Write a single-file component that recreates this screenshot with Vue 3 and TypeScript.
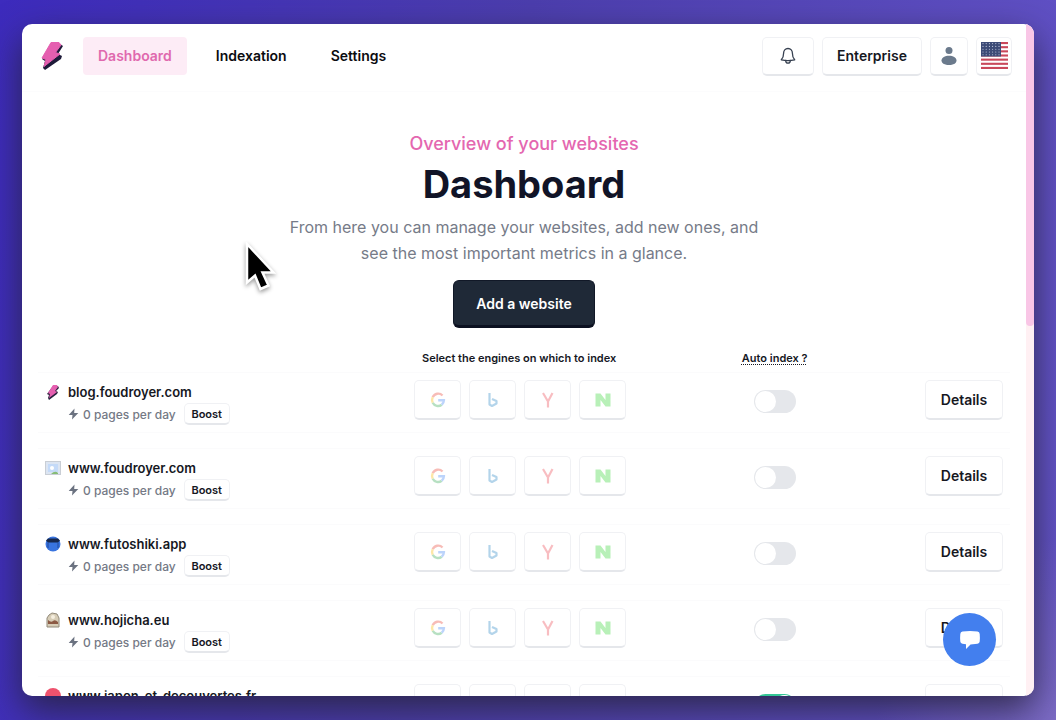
<script setup lang="ts">
import { ref } from 'vue'

interface Site {
  domain: string
  icon: 'bolt' | 'image' | 'ninja' | 'jar' | 'dot'
  auto: boolean
}

const navItems = ['Dashboard', 'Indexation', 'Settings']
const active = ref('Dashboard')
const engines = ['Google', 'Bing', 'Yandex', 'Naver']

const sites = ref<Site[]>([
  { domain: 'blog.foudroyer.com', icon: 'bolt', auto: false },
  { domain: 'www.foudroyer.com', icon: 'image', auto: false },
  { domain: 'www.futoshiki.app', icon: 'ninja', auto: false },
  { domain: 'www.hojicha.eu', icon: 'jar', auto: false },
  { domain: 'www.japon-et-decouvertes.fr', icon: 'dot', auto: true },
])
</script>

<template>
  <div class="backdrop">
    <div class="window">
      <div class="content">
        <header class="topbar">
          <a href="#" class="logo" aria-label="Foudroyer">
            <svg width="24" height="30" viewBox="0 0 24 30">
              <path d="M11 3 20 3 23 5 18 13 22 15 21 18 5 29 3 27 5 20 2 18Z" fill="#1e1b3a" />
              <path d="M11 1.500 19 1.500 21 4 15.500 11.500 20 13 4 25.500 6 18.500 2 17Z" fill="#e55fb0" stroke="#e55fb0" stroke-linejoin="round" />
            </svg>
          </a>
          <nav class="nav">
            <a
              v-for="item in navItems"
              :key="item"
              href="#"
              :class="{ active: active === item }"
              @click.prevent="active = item"
            >{{ item }}</a>
          </nav>
          <div class="actions">
            <button type="button" class="btn bell" aria-label="Notifications">
              <svg width="18" height="18" viewBox="0 0 18 18" fill="none" stroke="#374151" stroke-width="1.3" stroke-linejoin="round" stroke-linecap="round">
                <path d="M9 1.5C6.2 1.5 4.6 3.6 4.6 6.2c0 3.6-.9 5.2-2.3 6.6 4.4 1 9 1 13.4 0-1.4-1.4-2.3-3-2.3-6.6C13.4 3.6 11.8 1.5 9 1.5Z" />
                <path d="M6.7 13.5c0 3.6 4.6 3.6 4.6 0" />
              </svg>
            </button>
            <button type="button" class="btn plan">Enterprise</button>
            <button type="button" class="btn user" aria-label="Account">
              <svg width="16" height="20" viewBox="0 0 16 20" fill="#6b7a8c">
                <circle cx="8" cy="4.5" r="3.5" />
                <path d="M.5 14.5C.5 11.5 4 9.7 8 9.7s7.5 1.8 7.5 4.8C15.5 17.5 12 19 8 19S.5 17.5.5 14.5Z" />
              </svg>
            </button>
            <button type="button" class="btn flag" aria-label="Language">
              <svg width="27" height="27" viewBox="0 0 27 27">
                <rect width="27" height="27" fill="#fff" />
                <rect v-for="n in 7" :key="n" y="0" width="27" height="2.1" :transform="`translate(0 ${(n - 1) * 4.15})`" fill="#c9485b" />
                <rect width="20" height="14.5" fill="#3c4b77" />
                <g fill="#c5cce0">
                  <template v-for="r in 5" :key="r">
                    <circle v-for="c in 6" :key="c" :cx="c * 3.2 - 1.2" :cy="r * 2.8 - 1.2" r=".55" />
                  </template>
                </g>
              </svg>
            </button>
          </div>
        </header>

        <main>
          <section class="hero">
            <p class="eyebrow">Overview of your websites</p>
            <h1>Dashboard</h1>
            <p class="lead">From here you can manage your websites, add new ones, and see the most important metrics in a glance.</p>
            <button type="button" class="primary">Add a website</button>
          </section>

          <table class="sites">
            <colgroup>
              <col class="c-site" />
              <col class="c-engines" />
              <col class="c-auto" />
              <col class="c-details" />
            </colgroup>
            <thead>
              <tr>
                <td></td>
                <th scope="col">Select the engines on which to index</th>
                <th scope="col" class="auto"><abbr title="Index new pages automatically">Auto index ?</abbr></th>
                <td></td>
              </tr>
            </thead>
            <tbody>
              <tr v-for="site in sites" :key="site.domain">
                <td>
                  <div class="site">
                    <svg class="favicon" width="16" height="16" viewBox="0 0 16 16">
                      <template v-if="site.icon === 'bolt'">
                        <path d="M8 2h5l1 2-3 3 2 1-1 2-8 6-1-2 1-3-2-1Z" fill="#28213d" />
                        <path d="M8 1h4l1 2-3 4 2 1-8 6 1-4-2-1Z" fill="#e55fb0" />
                      </template>
                      <template v-else-if="site.icon === 'image'">
                        <rect x=".5" y="1.5" width="15" height="13" fill="#dce5f2" stroke="#c9ced5" />
                        <rect x="3" y="4" width="10" height="8" fill="#c4daf8" />
                        <circle cx="7" cy="8" r="2" fill="#fff" />
                        <path d="M6 14q4-4 7-1v1Z" fill="#86bc75" />
                      </template>
                      <template v-else-if="site.icon === 'ninja'">
                        <circle cx="8" cy="8" r="7.5" fill="#3974df" />
                        <path d="M1 4.500 3 2.500H13L15 4.500 13 6.500H3Z" fill="#17284e" />
                        <path d="M3 6.500V12M13 6.500V12" stroke="#234a9c" />
                      </template>
                      <template v-else-if="site.icon === 'jar'">
                        <path d="M4 3 7 1l5 1 2 4v9H2V6Z" fill="#d7cdb7" stroke="#918979" />
                        <path d="M3 8q3 3 5 1t5 1v2H3Z" fill="#8c5a44" />
                        <circle cx="8" cy="5" r="2" fill="#f5eedf" />
                      </template>
                      <circle v-else cx="8" cy="8" r="8" fill="#ee526d" />
                    </svg>
                    <div>
                      <div class="domain">{{ site.domain }}</div>
                      <div class="meta">
                        <svg width="11" height="12" viewBox="0 0 11 12" fill="#6b7280">
                          <path d="M6.5.5.7 7h3.8L4 11.5 10.3 5H6.2Z" />
                        </svg>
                        <span>0 pages per day</span>
                        <button type="button" class="btn boost">Boost</button>
                      </div>
                    </div>
                  </div>
                </td>
                <td>
                  <div class="engines">
                    <button v-for="engine in engines" :key="engine" type="button" class="btn engine" :aria-label="engine">
                      <svg width="18" height="18" viewBox="0 0 18 18" :class="{ muted: !(site.auto && engine === 'Google') }" fill="none">
                        <g v-if="engine === 'Google'" stroke-width="2.4">
                          <path d="M13.5 4.5A6 6 0 0 0 3.7 6.300" stroke="#ea4335" />
                          <path d="M3.700 6.300a6 6 0 0 0 0 5.400" stroke="#fbbc05" />
                          <path d="M3.700 11.700a6 6 0 0 0 9 2" stroke="#34a853" />
                          <path d="M12.700 13.700a6 6 0 0 0 2.200-4.500H9.200" stroke="#4285f4" />
                        </g>
                        <g v-else-if="engine === 'Bing'" stroke="#2886c5" stroke-width="2.200" stroke-linejoin="round">
                          <path d="M5.500 2V13.500L8 15 12.500 12.500V10L8 8" />
                        </g>
                        <path v-else-if="engine === 'Yandex'" d="M4 2 9 10.5M13.500 2 9 10.500V16.500" stroke="#ec4651" stroke-width="2.200" />
                        <path v-else d="M1.5 2.5h5l5 6.5V2.5h5v13h-5l-5-6.5v6.5h-5Z" fill="#37d636" />
                      </svg>
                    </button>
                  </div>
                </td>
                <td class="auto">
                  <input v-model="site.auto" type="checkbox" role="switch" class="toggle" :aria-label="`Auto index ${site.domain}`" />
                </td>
                <td class="details">
                  <button type="button" class="btn detail">Details</button>
                </td>
              </tr>
            </tbody>
          </table>
        </main>
      </div>
      <div class="scrollbar"><div class="thumb"></div></div>
      <button type="button" class="chat" aria-label="Open chat">
        <svg width="22" height="20" viewBox="0 0 22 20" fill="#fff">
          <path d="M3.5 1.5Q11 .3 18.5 1.5 20.5 1.8 20.7 4 21.1 8 20.7 11.5 20.5 13.5 18.5 13.8L11.5 14.5 7 19V14.3L3.5 13.8Q1.5 13.5 1.3 11.5.9 8 1.3 4 1.5 1.8 3.5 1.5Z" />
        </svg>
      </button>
    </div>
    <svg class="cursor" width="38" height="54" viewBox="0 0 38 54">
      <path d="M3 2V40.500L11 33.500 16.500 47 24.500 43.500 18.500 30.500H29.500Z" fill="#000" stroke="#fff" stroke-width="2.500" />
    </svg>
  </div>
</template>

<style>
body {
  margin: 0;
}
</style>

<style scoped>
.backdrop {
  position: relative;
  box-sizing: border-box;
  height: 100vh;
  padding: 24px 22px;
  overflow: hidden;
  font-family: Inter, "Liberation Sans", sans-serif;
  color: #16181f;
  background:
    radial-gradient(circle at 100% 100%, #7d6cc6 0, transparent 180px),
    linear-gradient(100deg, #3d2bbd 0%, #4c3eae 45%, #6454c9 100%);
}
.window {
  position: relative;
  display: flex;
  height: 100%;
  overflow: hidden;
  border-radius: 10px;
  background: #fff;
  box-shadow: 0 14px 36px rgba(38, 34, 58, 0.85);
}
.content {
  flex: 1;
  min-width: 0;
}
.scrollbar {
  width: 8px;
  background: #fff0f3;
}
.thumb {
  height: 45%;
  background: #f9c6e6;
  border-radius: 0 0 4px 4px;
}
button {
  font: inherit;
  color: inherit;
  cursor: pointer;
}
.btn {
  display: inline-flex;
  align-items: center;
  justify-content: center;
  box-sizing: border-box;
  padding: 0;
  font-weight: 600;
  background: #fff;
  border: 1px solid #f0f1f4;
  border-bottom: 2px solid #e5e7eb;
  border-radius: 5px;
}
.topbar {
  display: flex;
  align-items: center;
  box-sizing: border-box;
  height: 68px;
  padding: 0 14px 3px 18px;
  border-bottom: 1px solid #fcfcfd;
}
.logo {
  display: flex;
  margin-right: 19px;
}
.nav {
  display: flex;
  gap: 14px;
}
.nav a {
  padding: 0 15px;
  font-size: 14px;
  font-weight: 600;
  line-height: 38px;
  color: #0b0c10;
  text-decoration: none;
  border-radius: 4px;
}
.nav .active {
  color: #e069ae;
  background: #fdecf6;
}
.actions {
  display: flex;
  gap: 8px;
  margin-left: auto;
}
.actions .btn {
  height: 39px;
  font-size: 14px;
}
.actions .bell {
  width: 52px;
}
.actions .plan {
  width: 100px;
}
.actions .user {
  width: 38px;
}
.actions .flag {
  width: 36px;
}
.hero {
  display: flex;
  flex-direction: column;
  align-items: center;
  padding-top: 40px;
  text-align: center;
}
.hero p,
.hero h1 {
  margin: 0;
}
.hero .eyebrow {
  font-size: 18px;
  font-weight: 500;
  line-height: 24px;
  color: #e467b0;
}
.hero h1 {
  font-size: 38px;
  font-weight: 700;
  line-height: 56px;
  color: #111427;
}
.hero .lead {
  max-width: 500px;
  margin-top: 2px;
  font-size: 16px;
  line-height: 26px;
  color: #767b88;
}
.primary {
  width: 142px;
  height: 48px;
  margin-top: 14px;
  padding: 0;
  font-size: 14px;
  font-weight: 600;
  color: #fff;
  background: #1f2937;
  border: 1px solid #111827;
  border-bottom: 3px solid #0b1020;
  border-radius: 6px;
}
.sites {
  width: calc(100% - 32px);
  margin: 20px 16px 0;
  table-layout: fixed;
  border-collapse: separate;
  border-spacing: 0;
}
.c-site {
  width: 38%;
}
.c-engines {
  width: 23%;
}
.c-auto {
  width: 30%;
}
.c-details {
  width: 9%;
}
.sites td {
  padding: 0;
  vertical-align: top;
}
.sites th {
  height: 24px;
  padding: 0;
  font-size: 11px;
  font-weight: 600;
  line-height: 20px;
  vertical-align: top;
  white-space: nowrap;
}
.sites abbr {
  text-decoration: underline dotted;
  text-underline-offset: 2px;
}
.sites tbody td {
  box-sizing: border-box;
  height: 76px;
  border-top: 1px solid #fbfbfc;
  background: linear-gradient(#fbfbfc, #fbfbfc) 0 59px / 100% 1px no-repeat;
}
.site {
  display: flex;
  gap: 7px;
  padding: 8px 0 0 7px;
}
.favicon {
  margin-top: 3px;
}
.domain {
  font-size: 13px;
  font-weight: 600;
  line-height: 22px;
  white-space: nowrap;
}
.meta {
  display: flex;
  align-items: center;
  gap: 4px;
  font-size: 12px;
  font-weight: 500;
  color: #747985;
}
.boost {
  width: 46px;
  height: 22px;
  margin-left: 4px;
  font-size: 11px;
  color: #16181f;
}
.engines {
  display: flex;
  justify-content: center;
  gap: 8px;
  padding: 7px 0 0 2px;
}
.engine {
  width: 47px;
  height: 40px;
}
.muted {
  opacity: 0.35;
}
.sites .auto {
  padding-right: 4px;
  text-align: center;
}
.toggle {
  box-sizing: border-box;
  width: 42px;
  height: 23px;
  margin: 17px 0 0;
  padding: 1px;
  appearance: none;
  background: #e5e7eb;
  border-radius: 12px;
}
.toggle::before {
  display: block;
  width: 21px;
  height: 21px;
  content: "";
  background: #fff;
  border-radius: 50%;
}
.toggle:checked {
  background: #34c796;
}
.toggle:checked::before {
  margin-left: auto;
}
.sites .details {
  padding: 7px 7px 0 0;
  text-align: right;
}
.detail {
  width: 78px;
  height: 40px;
  font-size: 14px;
}
.chat {
  position: absolute;
  right: 38px;
  bottom: 30px;
  display: flex;
  align-items: center;
  justify-content: center;
  width: 53px;
  height: 53px;
  padding: 0;
  background: #437fee;
  border: 0;
  border-radius: 50%;
}
.cursor {
  position: absolute;
  top: 242px;
  left: 244px;
  filter: drop-shadow(0 2px 2px rgba(0, 0, 0, 0.4));
}
</style>
